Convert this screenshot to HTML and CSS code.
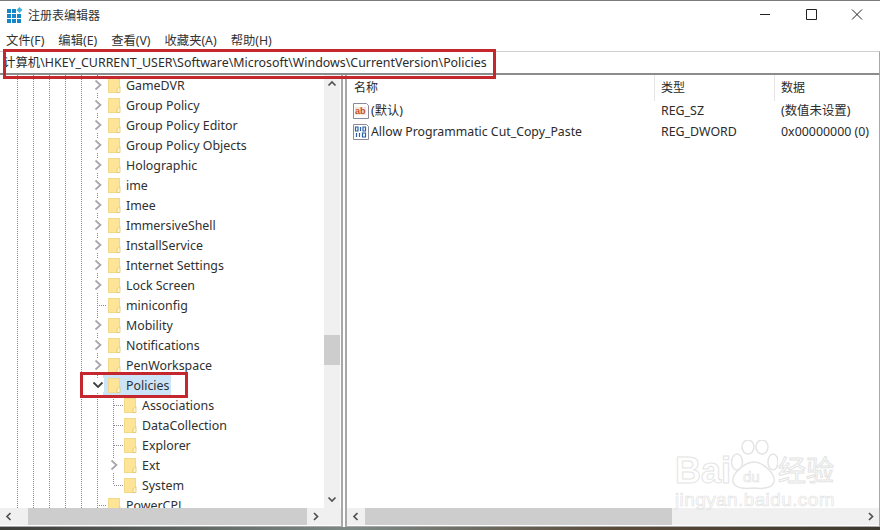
FILE: index.html
```html
<!DOCTYPE html>
<html lang="zh-CN">
<head>
<meta charset="utf-8">
<title>注册表编辑器</title>
<link rel="stylesheet" href="styles.css">
</head>
<body>
<svg class="defs" width="0" height="0" aria-hidden="true">
  <defs>
    <symbol id="folder" viewBox="0 0 14 20">
      <path d="M1 3h12v15H1z" fill="#fde496"/>
      <path d="M1.500 3.500h11v14h-11z" fill="none" stroke="#f2d98a"/>
      <path d="M10 17.500v-3.500l3-2.500v6z" fill="#fff6cf" stroke="#e3c469" stroke-width=".8"/>
    </symbol>
    <symbol id="right" viewBox="0 0 10 12"><path d="M2.500 1.500 7.500 6l-5 4.500" fill="none" stroke="#a6a6a6" stroke-width="1.700"/></symbol>
    <symbol id="down" viewBox="0 0 12 10"><path d="M1.500 2.500 6 7l4.500-4.500" fill="none" stroke="#404040" stroke-width="1.800"/></symbol>
  </defs>
</svg>
<main class="window">
  <header class="titlebar">
    <svg class="appicon" width="16" height="16" viewBox="0 0 16 16" aria-hidden="true">
      <path d="M0 2h4v4H0zM5 2h4v4H5zM0 7h4v4H0zM5 7h4v4H5zM10 7h4v4h-4zM0 12h4v4H0zM5 12h4v4H5zM10 12h4v4h-4z" fill="#1587c8"/>
      <path d="M12.500 0 15.500 3 12.500 6 9.500 3z" fill="#3fb4d8"/>
    </svg>
    <span class="title">注册表编辑器</span>
    <div class="controls">
      <svg width="12" height="12" viewBox="0 0 12 12" aria-hidden="true"><path d="M1 5.500h10" stroke="#222" fill="none"/></svg>
      <svg width="12" height="12" viewBox="0 0 12 12" aria-hidden="true"><path d="M1.500 .500h10v10h-10z" stroke="#222" fill="none"/></svg>
      <svg width="12" height="12" viewBox="0 0 12 12" aria-hidden="true"><path d="M1 .500l10 10M11 .500l-10 10" stroke="#222" fill="none"/></svg>
    </div>
  </header>
  <nav class="menu">
    <span>文件(F)</span><span>编辑(E)</span><span>查看(V)</span><span>收藏夹(A)</span><span>帮助(H)</span>
  </nav>
  <div class="address"><div class="pathclip"><span class="path">计算机\HKEY_CURRENT_USER\Software\Microsoft\Windows\CurrentVersion\Policies</span></div></div>
  <div class="panes">
    <section class="left">
      <div class="left-main">
        <div class="tree">
          <div class="row"><svg class="tw"><use href="#right"/></svg><svg class="fd"><use href="#folder"/></svg><span class="lb">GameDVR</span></div>
          <div class="row"><svg class="tw"><use href="#right"/></svg><svg class="fd"><use href="#folder"/></svg><span class="lb">Group Policy</span></div>
          <div class="row"><svg class="tw"><use href="#right"/></svg><svg class="fd"><use href="#folder"/></svg><span class="lb">Group Policy Editor</span></div>
          <div class="row"><svg class="tw"><use href="#right"/></svg><svg class="fd"><use href="#folder"/></svg><span class="lb">Group Policy Objects</span></div>
          <div class="row"><svg class="tw"><use href="#right"/></svg><svg class="fd"><use href="#folder"/></svg><span class="lb">Holographic</span></div>
          <div class="row"><svg class="tw"><use href="#right"/></svg><svg class="fd"><use href="#folder"/></svg><span class="lb">ime</span></div>
          <div class="row"><svg class="tw"><use href="#right"/></svg><svg class="fd"><use href="#folder"/></svg><span class="lb">Imee</span></div>
          <div class="row"><svg class="tw"><use href="#right"/></svg><svg class="fd"><use href="#folder"/></svg><span class="lb">ImmersiveShell</span></div>
          <div class="row"><svg class="tw"><use href="#right"/></svg><svg class="fd"><use href="#folder"/></svg><span class="lb">InstallService</span></div>
          <div class="row"><svg class="tw"><use href="#right"/></svg><svg class="fd"><use href="#folder"/></svg><span class="lb">Internet Settings</span></div>
          <div class="row"><svg class="tw"><use href="#right"/></svg><svg class="fd"><use href="#folder"/></svg><span class="lb">Lock Screen</span></div>
          <div class="row"><i class="tick"></i><svg class="fd"><use href="#folder"/></svg><span class="lb">miniconfig</span></div>
          <div class="row"><svg class="tw"><use href="#right"/></svg><svg class="fd"><use href="#folder"/></svg><span class="lb">Mobility</span></div>
          <div class="row"><svg class="tw"><use href="#right"/></svg><svg class="fd"><use href="#folder"/></svg><span class="lb">Notifications</span></div>
          <div class="row"><svg class="tw"><use href="#right"/></svg><svg class="fd"><use href="#folder"/></svg><span class="lb">PenWorkspace</span></div>
          <div class="row"><svg class="tw open"><use href="#down"/></svg><div class="selected"><svg class="fd"><use href="#folder"/></svg><span class="lb">Policies</span></div></div>
          <div class="row child"><i class="tick"></i><svg class="fd"><use href="#folder"/></svg><span class="lb">Associations</span></div>
          <div class="row child"><i class="tick"></i><svg class="fd"><use href="#folder"/></svg><span class="lb">DataCollection</span></div>
          <div class="row child"><i class="tick"></i><svg class="fd"><use href="#folder"/></svg><span class="lb">Explorer</span></div>
          <div class="row child"><svg class="tw"><use href="#right"/></svg><svg class="fd"><use href="#folder"/></svg><span class="lb">Ext</span></div>
          <div class="row child last"><i class="tick"></i><svg class="fd"><use href="#folder"/></svg><span class="lb">System</span></div>
          <div class="row"><i class="tick"></i><svg class="fd"><use href="#folder"/></svg><span class="lb">PowerCPL</span></div>
        </div>
        <div class="vscroll">
          <svg width="16" height="16" viewBox="0 0 16 16" aria-hidden="true"><path d="M4.500 10 8 6.500l3.500 3.500" fill="none" stroke="#505050" stroke-width="1.700"/></svg>
          <div class="vtrack"><div class="vthumb"></div></div>
          <svg width="16" height="16" viewBox="0 0 16 16" aria-hidden="true"><path d="M4.500 6 8 9.500 11.500 6" fill="none" stroke="#505050" stroke-width="1.700"/></svg>
        </div>
      </div>
      <div class="hscroll corner">
        <svg width="17" height="17" viewBox="0 0 17 17" aria-hidden="true"><path d="M10.500 5 7 8.500l3.500 3.500" fill="none" stroke="#505050" stroke-width="1.700"/></svg>
        <div class="htrack tree-track"><div class="hthumb"></div></div>
        <svg width="17" height="17" viewBox="0 0 17 17" aria-hidden="true"><path d="M7 5l3.500 3.500L7 12" fill="none" stroke="#505050" stroke-width="1.700"/></svg>
      </div>
    </section>
    <section class="right">
      <div class="list">
        <div class="thead"><span class="cname">名称</span><span class="ctype">类型</span><span class="cdata">数据</span></div>
        <div class="trow">
          <span class="cname">
            <svg class="vicon" width="16" height="16" viewBox="0 0 16 16" aria-hidden="true"><path d="M.5 .5h13l2 2v13H.5z" fill="#fff" stroke="#8a8a9a"/><path d="M2 4h11v8H2z" fill="#f6e3da"/><text x="2" y="11" class="abtext">ab</text></svg>
            <span class="vname">(默认)</span>
          </span>
          <span class="ctype">REG_SZ</span><span class="cdata">(数值未设置)</span>
        </div>
        <div class="trow">
          <span class="cname">
            <svg class="vicon" width="16" height="16" viewBox="0 0 16 16" aria-hidden="true"><path d="M.5 .5h13l2 2v13H.5z" fill="#fff" stroke="#8a8a9a"/><path d="M2.500 3h2.500v4H2.500zM7.500 3v4M10 3h2.500v4H10zM3.500 9v4M6.500 9v4M9.500 9h3v4h-3z" fill="none" stroke="#2a5fa8" stroke-width="1.200"/></svg>
            <span class="vname">Allow Programmatic Cut_Copy_Paste</span>
          </span>
          <span class="ctype">REG_DWORD</span><span class="cdata">0x00000000 (0)</span>
        </div>
      </div>
      <div class="hscroll">
        <svg width="17" height="17" viewBox="0 0 17 17" aria-hidden="true"><path d="M10.500 5 7 8.500l3.500 3.500" fill="none" stroke="#505050" stroke-width="1.700"/></svg>
        <div class="htrack list-track"><div class="hthumb"></div></div>
        <svg width="17" height="17" viewBox="0 0 17 17" aria-hidden="true"><path d="M7 5l3.500 3.500L7 12" fill="none" stroke="#505050" stroke-width="1.700"/></svg>
      </div>
    </section>
  </div>
  <div class="mark mark-address"></div>
  <div class="mark mark-policies"></div>
  <div class="watermark">
    <span class="wm-bai">Bai</span>
    <svg class="wm-paw" width="48" height="52" viewBox="0 0 48 52" aria-hidden="true">
      <g fill="none" stroke="#e4e4e4" stroke-width="1.500">
        <ellipse cx="7" cy="22" rx="5.500" ry="8"/><ellipse cx="18" cy="7" rx="6" ry="7"/><ellipse cx="32" cy="7" rx="6" ry="7"/><ellipse cx="43" cy="22" rx="5" ry="8"/>
        <path d="M24 22c9 0 22 12 20 20-2 7-11 7-20 6-9 1-19 1-21-6-2-8 12-20 21-20z"/>
      </g>
      <text x="13" y="42" class="wm-du">du</text>
    </svg>
    <span class="wm-jy">经验</span>
    <span class="wm-url">jingyan.baidu.com</span>
  </div>
</main>
<footer class="desk"></footer>
</body>
</html>
```

FILE: styles.css
```css
* { box-sizing: border-box; }
html, body { margin: 0; height: 530px; overflow: hidden; background: #fff; }
body {
  display: flex;
  flex-direction: column;
  font: 12.400px/20px "Noto Sans", "Noto Sans CJK SC", sans-serif;
  color: #2b2b2b;
}
.defs { position: absolute; }
.window {
  position: relative;
  flex: 1;
  min-height: 0;
  display: flex;
  flex-direction: column;
  border-top: 1px solid #7b7b7b;
  background: #fff;
}
.titlebar { height: 29px; display: flex; align-items: center; padding-left: 7px; }
.appicon { margin-right: 5px; margin-bottom: 1px; }
.title { font-size: 12px; color: #333; }
.controls { margin-left: auto; margin-bottom: 1px; display: flex; gap: 34px; padding-right: 17px; }
.menu { height: 21px; display: flex; gap: 14px; padding-left: 6px; font-size: 12.300px; line-height: 21px; color: #333; }
.address {
  height: 24px;
  border-top: 1px solid #cfcfcf;
  border-bottom: 2px solid #8c8c8c;
  border-right: 1px solid #a8a8a8;
  padding-left: 6px;
  line-height: 21px;
}
.pathclip { overflow: hidden; }
.path { display: block; margin-left: -3px; white-space: nowrap; }
.panes { flex: 1; min-height: 0; display: flex; }
.left {
  width: 343px;
  display: flex;
  flex-direction: column;
  border-right: 2px solid #a8a8a8;
  border-bottom: 1px solid #a8a8a8;
}
.left-main { flex: 1; min-height: 0; display: flex; }
.tree {
  flex: 1;
  min-width: 0;
  overflow: hidden;
  padding-left: 93px;
  background-image:
    linear-gradient(#8a8a8a 50%, transparent 50%),
    linear-gradient(#8a8a8a 50%, transparent 50%),
    linear-gradient(#8a8a8a 50%, transparent 50%),
    linear-gradient(#8a8a8a 50%, transparent 50%),
    linear-gradient(#8a8a8a 50%, transparent 50%),
    linear-gradient(#8a8a8a 50%, transparent 50%);
  background-size: 1px 2px;
  background-repeat: repeat-y;
  background-position: 17px 0, 33px 0, 49px 0, 65px 0, 81px 0, 97px 0;
}
.row { height: 20px; display: flex; align-items: center; white-space: nowrap; color: #303030; }
.child { padding-left: 16px; position: relative; }
.child::before { content: ""; position: absolute; left: 20px; top: 0; width: 1px; height: 100%; background: repeating-linear-gradient(#8a8a8a 0 1px, transparent 1px 2px); }
.child.last::before { height: 10px; }
.tw { width: 10px; height: 14px; flex: none; margin-right: 4px; background: #fff; position: relative; }
.tw.open { width: 12px; margin-left: -1px; margin-right: 0; }
.tick { width: 10px; height: 1px; margin-left: 4px; flex: none; background: repeating-linear-gradient(90deg, #8a8a8a 0 1px, transparent 1px 2px); }
.child .tick { margin-left: 5px; width: 9px; }
.fd { width: 14px; height: 20px; flex: none; margin-right: 5px; }
.lb { line-height: 20px; padding-top: 2px; }
.selected { display: flex; align-items: center; background: #cce4f7; height: 20px; margin-left: -1px; padding-left: 4px; padding-right: 2px; }
.vscroll { width: 16px; display: flex; flex-direction: column; background: #f0f0f0; margin-right: 1px; }
.vscroll svg { flex: none; height: 17px; }
.vtrack { flex: 1; padding-top: 243px; }
.vthumb { height: 30px; background: #cdcdcd; }
.hscroll { height: 17px; flex: none; display: flex; align-items: center; background: #f0f0f0; margin-bottom: 1px; }
.hscroll svg { flex: none; }
.corner { padding-right: 17px; }
.htrack { flex: 1; height: 100%; }
.tree-track { padding-left: 11px; }
.list-track { padding-left: 1px; padding-right: 190px; }
.hthumb { height: 100%; background: #cdcdcd; }
.right {
  flex: 1;
  min-width: 0;
  display: flex;
  flex-direction: column;
  margin-left: 2px;
  border-left: 2px solid #a8a8a8;
  border-right: 1px solid #a8a8a8;
  border-bottom: 1px solid #a8a8a8;
}
.list { flex: 1; min-height: 0; }
.thead, .trow { display: grid; grid-template-columns: 307px 120px 1fr; height: 21px; align-items: center; }
.thead { height: 25px; }
.thead span { border-left: 1px solid #e5e5e5; height: 100%; line-height: 26px; padding-left: 6px; font-size: 12px; }
.thead .cname { border-left: 0; padding-left: 7px; }
.trow > span { padding-left: 7px; white-space: nowrap; }
.trow > .cname { display: flex; align-items: center; gap: 2px; padding-left: 6px; }
.vname { font-size: 12.300px; }
.vicon { flex: none; }
.abtext { font: bold 9px "Liberation Sans", sans-serif; fill: #c0502a; }
.mark { position: absolute; border: 3px solid #c5272f; pointer-events: none; }
.mark-address { left: 3px; top: 48px; width: 493px; height: 30px; }
.mark-policies { left: 80px; top: 371px; width: 108px; height: 26px; }
.watermark { position: absolute; left: 672px; top: 439px; width: 200px; height: 70px; pointer-events: none; }
.wm-bai, .wm-jy, .wm-url, .wm-du { color: transparent; font-family: "Liberation Sans", "Noto Sans CJK SC", sans-serif; }
.wm-bai { position: absolute; left: 3px; top: 14px; font-size: 36px; line-height: 34px; font-weight: bold; -webkit-text-stroke: 1px #e4e4e4; }
.wm-paw { position: absolute; left: 58px; top: 0; }
.wm-du { font-size: 15px; fill: none; stroke: #e4e4e4; stroke-width: .7px; }
.wm-jy { position: absolute; left: 106px; top: 16px; font-size: 28px; line-height: 32px; -webkit-text-stroke: 1px #e4e4e4; }
.wm-url { position: absolute; left: 3px; top: 50px; font-size: 19px; line-height: 20px; letter-spacing: .4px; -webkit-text-stroke: .7px #e4e4e4; white-space: nowrap; }
.desk { height: 3px; flex: none; background: linear-gradient(90deg, #3c3c38, #7d8a86 40%, #5a4a38 70%, #3e3a30); }
```
